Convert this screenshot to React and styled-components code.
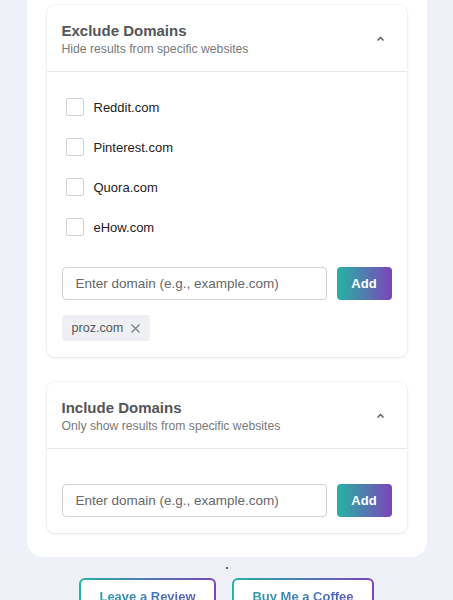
import styled, { createGlobalStyle } from "styled-components";

const Global = createGlobalStyle`
  html, body {
    margin: 0;
    background: #eef1f8;
    font-family: "Liberation Sans", Arial, sans-serif;
  }
`;

const Page = styled.div`
  display: flex;
  flex-direction: column;
  align-items: center;
  padding: 0 26px;
  width: 453px;
  box-sizing: border-box;
`;

const Panel = styled.div`
  width: 400px;
  background: #fff;
  border-radius: 0 0 16px 16px;
  padding: 5px 20px 24px;
  box-sizing: border-box;
  display: flex;
  flex-direction: column;
  gap: 25px;
`;

const Card = styled.section`
  background: #fff;
  border-radius: 8px;
  box-shadow: 0 1px 3px rgba(20, 30, 60, 0.1), 0 0 0 1px rgba(20, 30, 60, 0.03);
`;

const Header = styled.div`
  display: flex;
  align-items: center;
  justify-content: space-between;
  padding: 17px 22px 15px 15px;
  border-bottom: 1px solid #e6e8ec;
`;

const Title = styled.h3`
  margin: 0 0 3px;
  font-size: 15px;
  font-weight: 700;
  color: #545558;
`;

const Subtitle = styled.p`
  margin: 0;
  font-size: 12.2px;
  color: #77797d;
`;

const Body = styled.div`
  padding: ${(p) => p.$pad};
  display: flex;
  flex-direction: column;
`;

const CheckList = styled.div`
  display: flex;
  flex-direction: column;
  gap: 22px;
  padding: 26px 0 0 4px;
  margin-bottom: 31px;
`;

const CheckRow = styled.label`
  display: flex;
  align-items: center;
  gap: 10px;
  font-size: 13px;
  color: #1f2023;
  height: 18px;
`;

const Box = styled.span`
  width: 16px;
  height: 16px;
  border: 1.5px solid #cfd1d6;
  border-radius: 2px;
  background: #fff;
`;

const AddRow = styled.div`
  display: flex;
  gap: 10px;
`;

const Input = styled.input`
  width: 265px;
  height: 33px;
  box-sizing: border-box;
  border: 1px solid #cfd2d7;
  border-radius: 4px;
  padding: 0 13px;
  font-family: inherit;
  font-size: 13.5px;
  color: #333;
  &::placeholder {
    color: #66686c;
  }
`;

const AddButton = styled.button`
  width: 55px;
  height: 33px;
  border: 0;
  border-radius: 4px;
  background: linear-gradient(90deg, #26b3a5, #7b45b9);
  color: #fff;
  font-family: inherit;
  font-weight: 700;
  font-size: 13px;
`;

const Chips = styled.div`
  display: flex;
  margin-top: 15px;
`;

const Chip = styled.span`
  display: inline-flex;
  align-items: center;
  gap: 8px;
  height: 26px;
  padding: 0 10px 0 10px;
  background: #eef0f3;
  border-radius: 4px;
  font-size: 12.6px;
  color: #55575b;
`;

const Dot = styled.div`
  height: 21px;
  display: flex;
  align-items: center;
  justify-content: center;
  &::before {
    content: "";
    width: 2px;
    height: 2px;
    background: #666;
  }
`;

const Links = styled.div`
  display: flex;
  gap: 16px;
`;

const LinkButton = styled.a`
  display: flex;
  align-items: center;
  justify-content: center;
  width: ${(p) => p.$w}px;
  height: 36px;
  box-sizing: border-box;
  border: 2px solid transparent;
  border-radius: 6px;
  background: linear-gradient(#fff, #fff) padding-box,
    linear-gradient(90deg, #26b3a5, #7b45b9) border-box;
  font-size: 13px;
  font-weight: 700;
  span {
    background: linear-gradient(90deg, #2a9db0, #5d5cb8);
    -webkit-background-clip: text;
    background-clip: text;
    color: transparent;
  }
`;

const Chevron = () => (
  <svg width="9" height="6" viewBox="0 0 9 6">
    <path d="M1.5 4.5 L4.5 1.5 L7.5 4.5" fill="none" stroke="#555" strokeWidth="1.4" />
  </svg>
);

const Close = () => (
  <svg width="9" height="9" viewBox="0 0 9 9">
    <path d="M0.5 0.5 L8.5 8.5 M8.5 0.5 L0.5 8.5" stroke="#777" strokeWidth="1.1" />
  </svg>
);

const domains = ["Reddit.com", "Pinterest.com", "Quora.com", "eHow.com"];

export default function App() {
  return (
    <Page>
      <Global />
      <Panel>
        <Card>
          <Header>
            <div>
              <Title>Exclude Domains</Title>
              <Subtitle>Hide results from specific websites</Subtitle>
            </div>
            <Chevron />
          </Header>
          <Body $pad="0 15px 16px 15px">
            <CheckList>
              {domains.map((d) => (
                <CheckRow key={d}>
                  <Box />
                  {d}
                </CheckRow>
              ))}
            </CheckList>
            <AddRow>
              <Input placeholder="Enter domain (e.g., example.com)" />
              <AddButton>Add</AddButton>
            </AddRow>
            <Chips>
              <Chip>
                proz.com
                <Close />
              </Chip>
            </Chips>
          </Body>
        </Card>
        <Card>
          <Header>
            <div>
              <Title>Include Domains</Title>
              <Subtitle>Only show results from specific websites</Subtitle>
            </div>
            <Chevron />
          </Header>
          <Body $pad="35px 15px 16px 15px">
            <AddRow>
              <Input placeholder="Enter domain (e.g., example.com)" />
              <AddButton>Add</AddButton>
            </AddRow>
          </Body>
        </Card>
      </Panel>
      <Dot />
      <Links>
        <LinkButton $w={137}>
          <span>Leave a Review</span>
        </LinkButton>
        <LinkButton $w={142}>
          <span>Buy Me a Coffee</span>
        </LinkButton>
      </Links>
    </Page>
  );
}
